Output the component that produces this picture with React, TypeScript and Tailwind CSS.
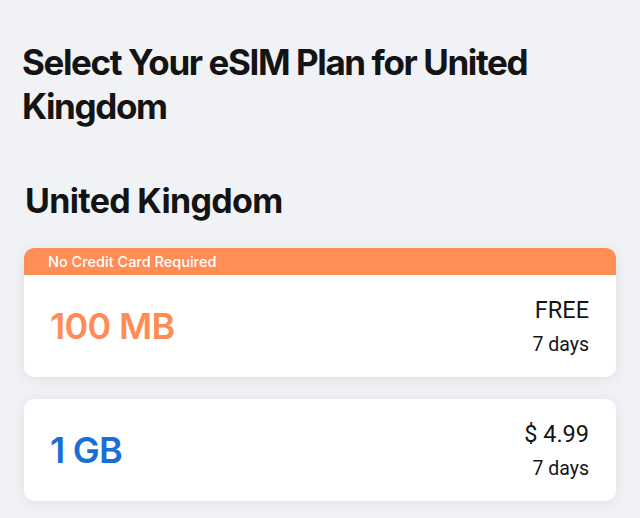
const plans = [
  { id: 'free', size: '100 MB', price: 'FREE', days: '7 days', badge: 'No Credit Card Required', color: 'text-[#ff8c54]' },
  { id: 'gb1', size: '1 GB', price: '$ 4.99', days: '7 days', color: 'text-[#1a6fd6]' },
];

export default function App() {
  return (
    <div className="min-h-[518px] bg-[#f1f2f6] px-[22px] pt-[40px] font-['Inter',sans-serif] text-[#141414]">
      <h1 className="text-[35px] font-bold leading-[44px] tracking-[-0.04em]">Select Your eSIM Plan for United Kingdom</h1>
      <h2 className="mt-[53px] pl-[3px] text-[34px] font-bold leading-[40px] tracking-[-0.02em]">United Kingdom</h2>
      <div className="mt-[27px] flex flex-col gap-[22px] pl-[2px] pr-[2px]">
        {plans.map((plan) => (
          <div
            key={plan.id}
            className="overflow-hidden rounded-[10px] bg-white shadow-[0_2px_14px_rgba(0,0,0,0.08)]"
          >
            {plan.badge ? (
              <div className="flex h-[27px] items-center bg-[#ff8d55] px-[24px] text-[14.5px] font-medium text-white">
                {plan.badge}
              </div>
            ) : null}
            <div className="flex h-[102px] items-center justify-between pl-[26px] pr-[27px]">
              <span className={`text-[36px] font-semibold tracking-[-0.02em] ${plan.color}`}>{plan.size}</span>
              <div className="flex flex-col items-end gap-[11px] font-['Roboto',sans-serif]">
                <span className="text-[23.5px] leading-[26px]">{plan.price}</span>
                <span className="text-[19.5px] leading-[22px]">{plan.days}</span>
              </div>
            </div>
          </div>
        ))}
      </div>
    </div>
  );
}
